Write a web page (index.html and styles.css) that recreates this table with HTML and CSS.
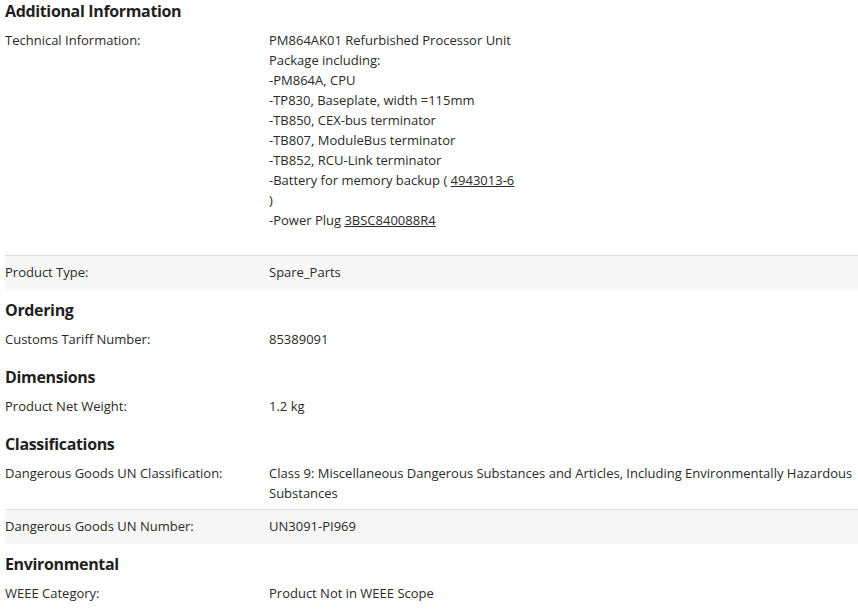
FILE: index.html
```html
<!DOCTYPE html>
<html>
<head>
<meta charset="utf-8">
<link rel="stylesheet" href="styles.css">
</head>
<body>
<div class="page">
  <h2 class="section-title first">Additional Information</h2>
  <div class="row row-tech">
    <div class="label">Technical Information:</div>
    <div class="value">PM864AK01 Refurbished Processor Unit<br>Package including:<br>-PM864A, CPU<br>-TP830, Baseplate, width =115mm<br>-TB850, CEX-bus terminator<br>-TB807, ModuleBus terminator<br>-TB852, RCU-Link terminator<br>-Battery for memory backup ( <a href="#">4943013-6</a><br>)<br>-Power Plug <a href="#">3BSC840088R4</a></div>
  </div>
  <div class="row row-alt">
    <div class="label">Product Type:</div>
    <div class="value">Spare_Parts</div>
  </div>

  <h2 class="section-title">Ordering</h2>
  <div class="row">
    <div class="label">Customs Tariff Number:</div>
    <div class="value">85389091</div>
  </div>

  <h2 class="section-title">Dimensions</h2>
  <div class="row">
    <div class="label">Product Net Weight:</div>
    <div class="value">1.2 kg</div>
  </div>

  <h2 class="section-title">Classifications</h2>
  <div class="row row-before-alt">
    <div class="label">Dangerous Goods UN Classification:</div>
    <div class="value">Class 9: Miscellaneous Dangerous Substances and Articles, Including Environmentally Hazardous Substances</div>
  </div>
  <div class="row row-alt">
    <div class="label">Dangerous Goods UN Number:</div>
    <div class="value">UN3091-PI969</div>
  </div>

  <h2 class="section-title">Environmental</h2>
  <div class="row">
    <div class="label">WEEE Category:</div>
    <div class="value">Product Not in WEEE Scope</div>
  </div>
</div>
</body>
</html>
```
FILE: styles.css
```css
html, body {
  margin: 0;
  padding: 0;
  background: #ffffff;
}
body {
  font-family: "Open Sans", "Noto Sans", sans-serif;
  font-size: 13px;
  line-height: 20px;
  color: #2a2a2a;
}
.page {
  padding: 0 0 0 5px;
}
.section-title {
  margin: 9px 0 0;
  font-size: 16px;
  font-weight: 700;
  line-height: 22px;
  letter-spacing: -0.35px;
  color: #1f1f1f;
}
.section-title.first {
  margin-top: 0;
}
.row {
  display: grid;
  grid-template-columns: 264px 1fr;
  padding: 8px 0;
}
.row-tech {
  padding-bottom: 25px;
}
.row-before-alt {
  padding-bottom: 6px;
}
.row-alt {
  background: #f7f7f7;
  border-top: 1px solid #e0e0e0;
  padding: 6px 0 8px;
}
.value a {
  color: #2a2a2a;
  text-decoration: underline;
}
```
